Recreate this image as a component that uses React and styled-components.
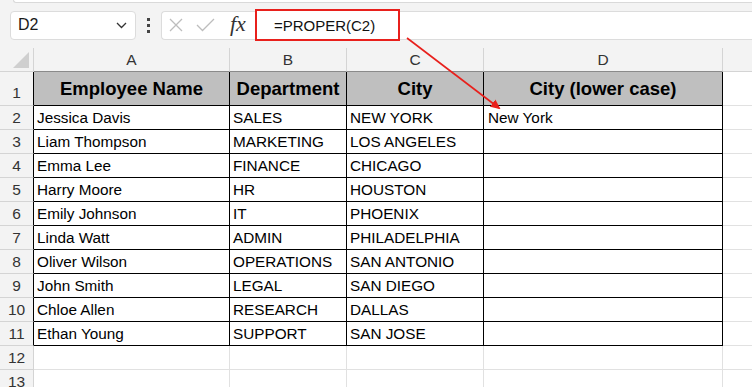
import React from 'react'
import styled, { createGlobalStyle } from 'styled-components'

const GlobalStyle = createGlobalStyle`
  html, body { margin: 0; padding: 0; background: #ffffff; }
  body { font-family: "Liberation Sans", Arial, sans-serif; overflow: hidden; }
`

const columns = ['A', 'B', 'C', 'D', '']
const headers = ['Employee Name', 'Department', 'City', 'City (lower case)']
const rows = [
  ['Jessica Davis', 'SALES', 'NEW YORK', 'New York'],
  ['Liam Thompson', 'MARKETING', 'LOS ANGELES', ''],
  ['Emma Lee', 'FINANCE', 'CHICAGO', ''],
  ['Harry Moore', 'HR', 'HOUSTON', ''],
  ['Emily Johnson', 'IT', 'PHOENIX', ''],
  ['Linda Watt', 'ADMIN', 'PHILADELPHIA', ''],
  ['Oliver Wilson', 'OPERATIONS', 'SAN ANTONIO', ''],
  ['John Smith', 'LEGAL', 'SAN DIEGO', ''],
  ['Chloe Allen', 'RESEARCH', 'DALLAS', ''],
  ['Ethan Young', 'SUPPORT', 'SAN JOSE', ''],
]

function App() {
  const empty = ['', '', '', '']

  return (
    <Page>
      <GlobalStyle />
      <RibbonEdge />
      <FormulaBar>
        <NameBox>
          <span>D2</span>
          <svg width="11" height="7" viewBox="0 0 11 7">
            <path d="M1 1 L5.5 5.5 L10 1" fill="none" stroke="#333" strokeWidth="1.3" />
          </svg>
        </NameBox>
        <Dots>
          <i /><i /><i />
        </Dots>
        <FormulaBox>
          <IconSlot>
            <svg width="14" height="14" viewBox="0 0 14 14">
              <path d="M1 1 L13 13 M13 1 L1 13" stroke="#bdbdbd" strokeWidth="1.3" fill="none" />
            </svg>
          </IconSlot>
          <IconSlot>
            <svg width="19" height="14" viewBox="0 0 19 14">
              <path d="M1 7 L6.5 12.5 L18 1" stroke="#bdbdbd" strokeWidth="1.3" fill="none" />
            </svg>
          </IconSlot>
          <Fx>fx</Fx>
          <FormulaText>=PROPER(C2)</FormulaText>
        </FormulaBox>
      </FormulaBar>

      <Sheet>
        <Corner>
          <svg width="16" height="16" viewBox="0 0 16 16">
            <path d="M16 0 L16 16 L0 16 Z" fill="#cfcfcf" />
          </svg>
        </Corner>
        {columns.map((c, i) => (
          <ColHead key={c + i} $inTable={i < 4} $last={i === 4}>{c}</ColHead>
        ))}

        <RowHead $inTable $tall>1</RowHead>
        {headers.map((h) => (
          <HeadCell key={h}>{h}</HeadCell>
        ))}
        <Cell $last />

        {rows.map((r, ri) => (
          <React.Fragment key={ri}>
            <RowHead $inTable>{ri + 2}</RowHead>
            {r.map((v, ci) => (
              <Cell key={ci} $inTable $pad={ci === 3 ? 4 : 3}>{v}</Cell>
            ))}
            <Cell $last />
          </React.Fragment>
        ))}

        {[12, 13].map((n) => (
          <React.Fragment key={n}>
            <RowHead>{n}</RowHead>
            {empty.map((v, ci) => (
              <Cell key={ci} />
            ))}
            <Cell $last />
          </React.Fragment>
        ))}
      </Sheet>

      <Arrow width="752" height="387" viewBox="0 0 752 387">
        <defs>
          <marker id="head" markerWidth="10" markerHeight="10" refX="8" refY="5" orient="auto" markerUnits="userSpaceOnUse">
            <path d="M0 0.5 L10 5 L0 9.5 Z" fill="#e8201c" />
          </marker>
        </defs>
        <line x1="407" y1="38" x2="499" y2="108" stroke="#e8201c" strokeWidth="1.6" markerEnd="url(#head)" />
      </Arrow>
    </Page>
  )
}

export default App

const Page = styled.div`
  position: relative;
  width: 752px;
  height: 387px;
  overflow: hidden;
  background: #f3f3f3;
`

const RibbonEdge = styled.div`
  height: 3px;
  margin-left: 13px;
  background: #ffffff;
  border-bottom: 1px solid #d9d9d9;
  border-left: 1px solid #d9d9d9;
  border-bottom-left-radius: 4px;
  box-sizing: border-box;
`

const FormulaBar = styled.div`
  display: flex;
  align-items: center;
  height: 45px;
  padding: 0 0 1px 10px;
  box-sizing: border-box;
`

const NameBox = styled.div`
  width: 126px;
  height: 29px;
  box-sizing: border-box;
  display: flex;
  align-items: center;
  justify-content: space-between;
  padding: 0 8px 0 7px;
  background: #ffffff;
  border: 1px solid #dcdcdc;
  border-radius: 4px;
  font-size: 16px;
  color: #1a1a1a;
`

const Dots = styled.div`
  display: flex;
  flex-direction: column;
  gap: 3px;
  margin: 0 11px 0 11px;

  i {
    display: block;
    width: 3px;
    height: 3px;
    background: #444;
  }
`

const FormulaBox = styled.div`
  flex: 1;
  height: 29px;
  box-sizing: border-box;
  display: flex;
  align-items: center;
  padding-left: 7px;
  background: #ffffff;
  border: 1px solid #dcdcdc;
  border-right: none;
  border-radius: 4px 0 0 4px;
`

const IconSlot = styled.span`
  display: flex;
  align-items: center;
  margin-right: 13px;
`

const Fx = styled.span`
  font-family: "Liberation Serif", "Times New Roman", serif;
  font-style: italic;
  font-size: 22px;
  color: #333;
  margin: -3px 9px 0 2px;
`

const FormulaText = styled.span`
  display: flex;
  align-items: center;
  width: 145px;
  height: 32px;
  box-sizing: border-box;
  padding-left: 17px;
  border: 2px solid #e8201c;
  font-size: 15px;
  color: #111;
  background: #ffffff;
`

const Sheet = styled.div`
  display: grid;
  grid-template-columns: 34px 196px 117px 137px 239px 1fr;
  grid-template-rows: 24px 34px repeat(12, 24px);
  background: #ffffff;
`

const Corner = styled.div`
  display: flex;
  align-items: flex-end;
  justify-content: flex-end;
  padding: 0 4px 3px 0;
  background: #f3f3f3;
  border-right: 1px solid #d4d4d4;
  border-bottom: 1px solid #d4d4d4;
`

const ColHead = styled.div`
  display: flex;
  align-items: center;
  justify-content: center;
  padding-top: 1px;
  background: #f3f3f3;
  font-size: 15.5px;
  color: #333;
  border-right: ${(p) => (p.$last ? 'none' : '1px solid #d4d4d4')};
  border-bottom: 1px solid ${(p) => (p.$inTable ? '#8a8a8a' : '#d4d4d4')};
`

const RowHead = styled.div`
  display: flex;
  align-items: ${(p) => (p.$tall ? 'flex-end' : 'center')};
  justify-content: center;
  padding-bottom: ${(p) => (p.$tall ? '3px' : '0')};
  background: #f3f3f3;
  font-size: 15.5px;
  color: #333;
  border-right: 1px solid ${(p) => (p.$inTable ? '#000' : '#d4d4d4')};
  border-bottom: 1px solid #d4d4d4;
`

const HeadCell = styled.div`
  display: flex;
  align-items: center;
  justify-content: center;
  background: #bfbfbf;
  font-weight: 700;
  font-size: 18.5px;
  color: #000;
  border-right: 1px solid #000;
  border-bottom: 1px solid #000;
  white-space: nowrap;
`

const Cell = styled.div`
  display: flex;
  align-items: center;
  padding-left: ${(p) => p.$pad || 3}px;
  padding-top: 1px;
  font-size: 15.3px;
  color: #000;
  white-space: nowrap;
  overflow: hidden;
  border-right: ${(p) => (p.$last ? 'none' : `1px solid ${p.$inTable ? '#000' : '#e1e1e1'}`)};
  border-bottom: 1px solid ${(p) => (p.$inTable ? '#000' : '#e1e1e1')};
`

const Arrow = styled.svg`
  position: absolute;
  left: 0;
  top: 0;
  pointer-events: none;
`
